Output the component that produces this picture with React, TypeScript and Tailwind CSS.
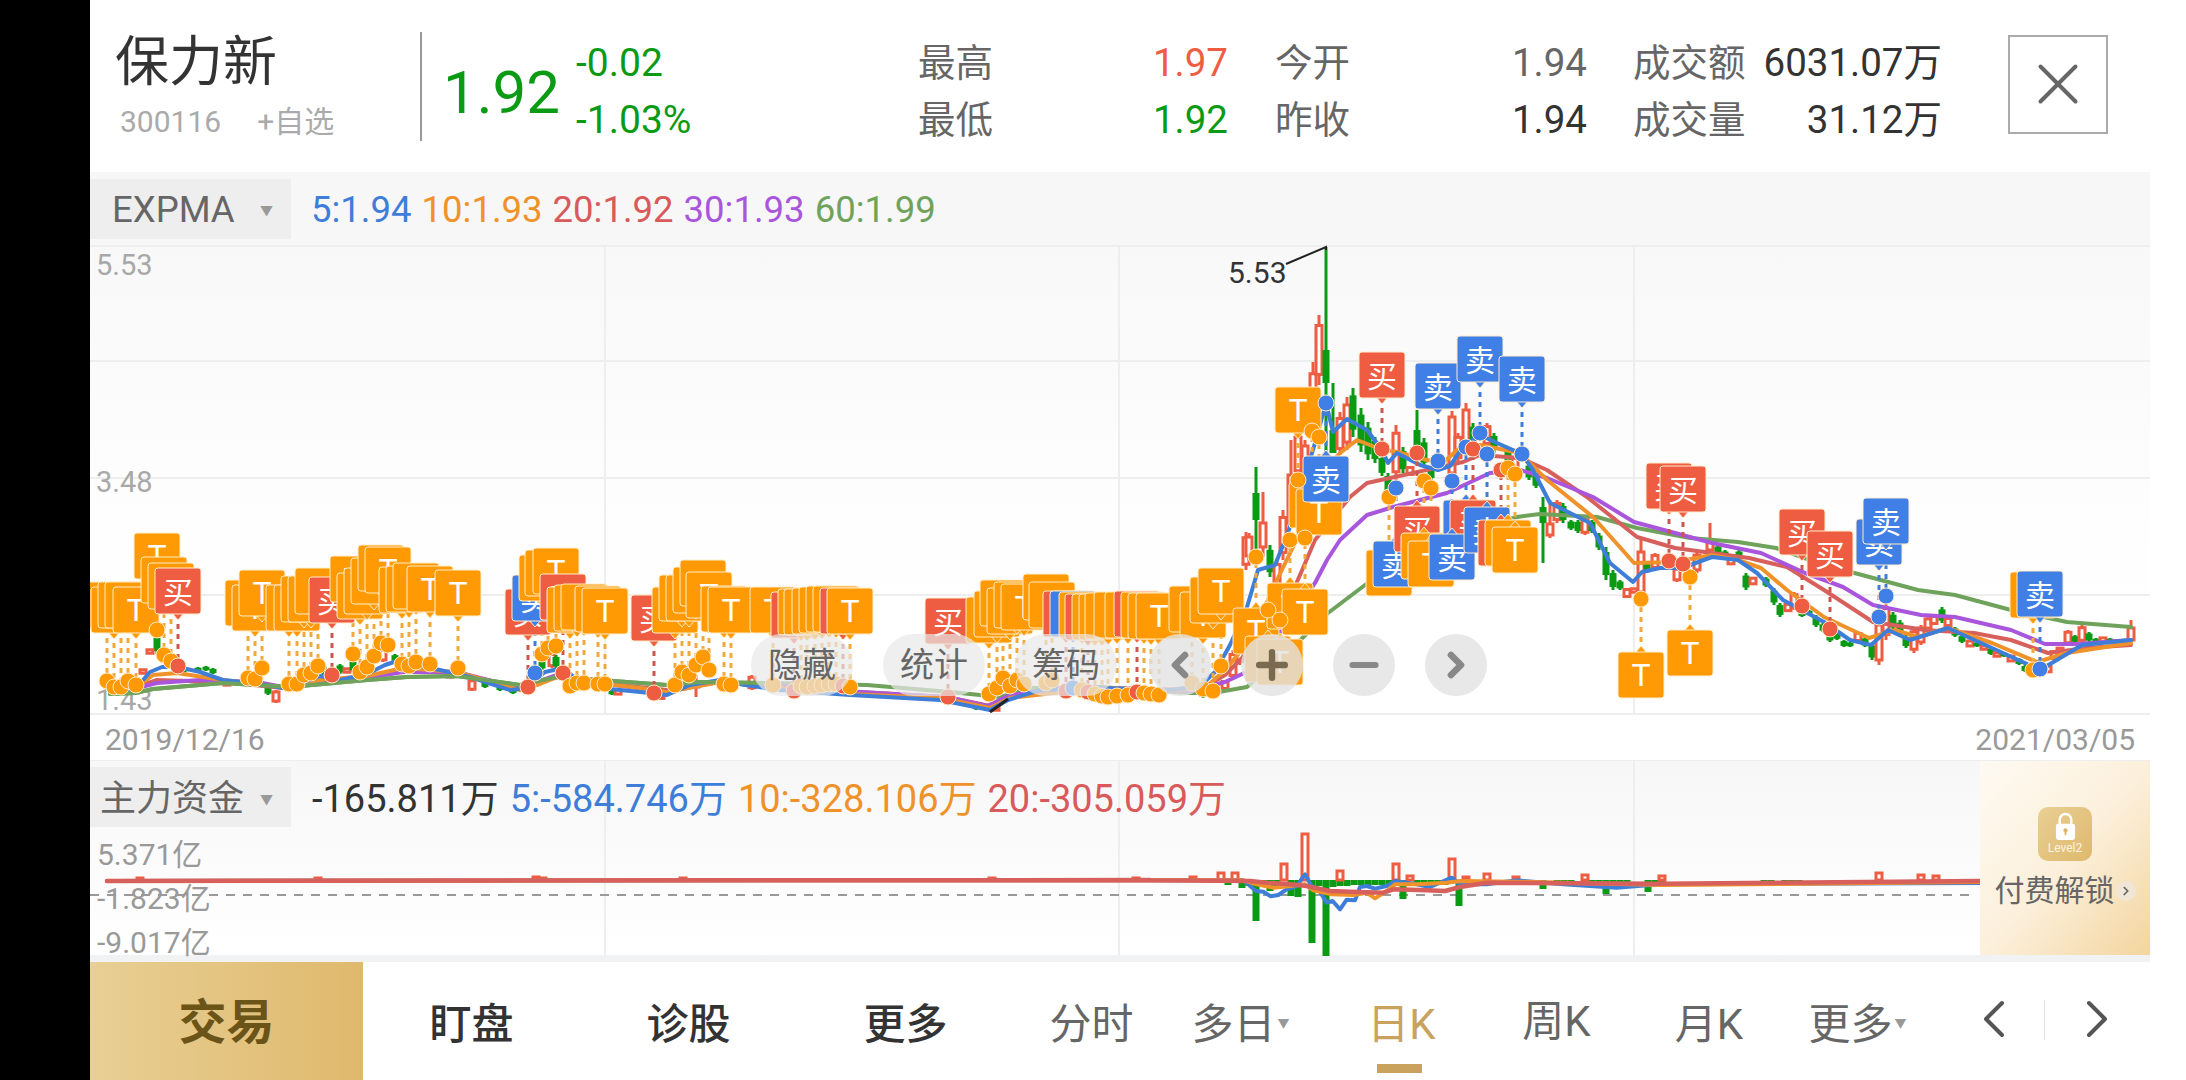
import { ChevronLeft, ChevronRight, Minus, Plus, X } from 'lucide-react';

type Kind = 'T' | '买' | '卖';
type Pt = [number, number];
// x, top of the box, dot y, points down or not
type Mark = [Kind, number, number, number, boolean?];
// x, wick top, wick bottom, red or green, optional body top and bottom
type Candle = [number, number, number, 'r' | 'g', number?, number?];

const RED = '#ee5c42';
const GREEN = '#0a9a14';
const BLUE = '#3f7fe6';
const ORANGE = '#ff9a05';

const markColor: Record<Kind, string> = { T: ORANGE, 买: RED, 卖: BLUE };
const lineColor: Record<Kind, string> = { T: '#efa93c', 买: '#c9574c', 卖: '#3f7ed8' };

const marks: Mark[] = [
  ['T', 107, 582, 681], ['T', 114, 587, 687], ['T', 121, 582, 687], ['T', 128, 582, 681], ['T', 136, 587, 685],
  ['T', 157, 533, 630], ['T', 164, 557, 655], ['T', 171, 563, 661], ['买', 178, 568, 666],
  ['T', 248, 580, 678], ['T', 255, 585, 679], ['T', 262, 570, 668],
  ['T', 289, 585, 684], ['T', 297, 585, 684], ['T', 304, 576, 675], ['T', 311, 576, 673], ['T', 318, 568, 666],
  ['买', 332, 577, 675],
  ['T', 353, 556, 654], ['T', 360, 573, 672], ['T', 367, 568, 667], ['T', 374, 558, 656], ['T', 381, 545, 643], ['T', 388, 547, 645],
  ['T', 402, 567, 664], ['T', 409, 566, 666], ['T', 416, 563, 662], ['T', 430, 566, 664], ['T', 458, 570, 668],
  ['买', 528, 589, 687], ['卖', 535, 575, 673], ['T', 542, 555, 654], ['T', 548, 550, 648], ['T', 556, 548, 646],
  ['买', 563, 574, 673], ['T', 570, 587, 686], ['T', 577, 585, 683], ['T', 584, 584, 683], ['T', 598, 586, 684],
  ['T', 605, 588, 684], ['买', 654, 595, 693],
  ['T', 675, 587, 685], ['T', 682, 575, 672], ['T', 689, 575, 675], ['T', 696, 567, 665], ['T', 703, 560, 657], ['T', 709, 572, 670],
  ['T', 724, 586, 684], ['T', 731, 587, 685], ['T', 773, 587, 685],
  ['买', 794, 592, 691], ['T', 801, 589, 686], ['T', 807, 589, 687], ['T', 815, 588, 686], ['T', 822, 587, 685],
  ['T', 829, 586, 684], ['T', 836, 586, 684], ['买', 843, 588, 686], ['T', 850, 588, 687],
  ['买', 948, 598, 697],
  ['T', 989, 597, 694], ['T', 997, 591, 688], ['T', 1003, 580, 678], ['T', 1010, 588, 686], ['T', 1017, 582, 680], ['T', 1024, 584, 684],
  ['T', 1046, 574, 683], ['T', 1052, 582, 680], ['买', 1066, 591, 691], ['卖', 1073, 591, 688],
  ['T', 1082, 592, 690], ['买', 1088, 594, 692], ['T', 1095, 594, 694], ['T', 1102, 594, 696], ['T', 1108, 593, 697],
  ['T', 1117, 592, 696], ['T', 1128, 592, 695], ['买', 1137, 591, 692], ['T', 1144, 592, 693], ['T', 1151, 593, 694], ['T', 1159, 593, 695],
  ['T', 1192, 586, 683], ['T', 1203, 592, 689], ['T', 1213, 577, 691], ['T', 1221, 568, 666],
  ['T', 1256, 608, 557, true], ['T', 1268, 636, 610, true], ['T', 1280, 639, 620, true], ['T', 1290, 583, 540, true], ['T', 1305, 589, 538, true],
  ['T', 1298, 387, 480], ['T', 1312, 482, 431, true], ['T', 1319, 489, 437, true], ['卖', 1326, 456, 403, true],
  ['买', 1382, 352, 449], ['卖', 1438, 363, 461], ['卖', 1480, 336, 433], ['卖', 1522, 356, 454],
  ['T', 1389, 550, 497, true], ['卖', 1396, 541, 488, true], ['买', 1417, 506, 453, true], ['T', 1424, 533, 481, true], ['T', 1431, 541, 488, true],
  ['卖', 1466, 500, 447, true], ['买', 1473, 500, 449, true], ['卖', 1452, 534, 481, true], ['卖', 1487, 507, 454, true],
  ['买', 1501, 520, 470, true], ['T', 1508, 520, 468, true], ['T', 1515, 527, 474, true],
  ['T', 1641, 652, 599, true], ['T', 1690, 630, 577, true],
  ['买', 1669, 463, 561], ['买', 1683, 466, 564], ['买', 1802, 509, 606], ['买', 1830, 531, 629],
  ['卖', 1879, 519, 617], ['卖', 1886, 498, 596], ['T', 2033, 572, 670], ['卖', 2040, 571, 669],
];

const candles: Candle[] = [
  [157, 635, 654, 'g'], [150, 649, 654, 'r'], [143, 669, 674, 'r'], [185, 667, 672, 'g'], [198, 667, 672, 'g'], [206, 666, 671, 'g'], [213, 668, 674, 'g'],
  [227, 680, 686, 'r'], [268, 686, 695, 'g'], [276, 690, 703, 'r'], [323, 665, 675, 'g'], [340, 664, 674, 'g'], [347, 668, 673, 'r'], [353, 660, 672, 'g'],
  [383, 648, 662, 'r'], [395, 654, 662, 'g'], [450, 672, 678, 'r'], [472, 679, 691, 'r'], [485, 681, 688, 'g'], [500, 685, 691, 'g'], [513, 688, 694, 'g'],
  [542, 660, 670, 'g'], [552, 652, 668, 'r'], [556, 655, 668, 'g'], [612, 690, 695, 'g'], [618, 689, 695, 'r'], [661, 695, 699, 'r'], [696, 675, 697, 'r', 683, 687],
  [705, 665, 674, 'g'], [752, 675, 690, 'r'], [976, 704, 710, 'g'], [996, 706, 711, 'r'],
  [1203, 690, 698, 'g'], [1225, 680, 690, 'r'], [1233, 650, 680, 'r'], [1240, 640, 665, 'r'],
  [1246, 532, 570, 'r'], [1249, 533, 560, 'r'], [1256, 467, 550, 'g', 493, 520], [1263, 492, 557, 'r', 523, 547], [1270, 545, 577, 'g'],
  [1277, 560, 590, 'r'], [1283, 510, 560, 'r'], [1291, 440, 523, 'r', 475, 523], [1298, 430, 478, 'r'], [1305, 440, 480, 'r'], [1313, 362, 440, 'r'],
  [1319, 315, 385, 'r'], [1326, 247, 455, 'g', 350, 383], [1333, 383, 453, 'g', 430, 453], [1340, 412, 455, 'r'], [1347, 397, 450, 'r'],
  [1353, 388, 437, 'g'], [1361, 408, 452, 'g'], [1368, 422, 460, 'g'], [1375, 437, 463, 'g'], [1382, 455, 476, 'g'], [1388, 473, 493, 'g'],
  [1396, 425, 480, 'r'], [1403, 447, 473, 'g'], [1410, 466, 476, 'r'], [1417, 410, 460, 'g', 430, 450], [1424, 438, 467, 'g'], [1431, 467, 480, 'g'],
  [1452, 411, 473, 'r', 417, 473], [1458, 433, 462, 'r'], [1466, 403, 450, 'r'], [1473, 423, 447, 'g'], [1487, 423, 447, 'r'], [1494, 433, 453, 'g'],
  [1508, 447, 463, 'g'], [1515, 456, 470, 'r'], [1529, 463, 480, 'g'], [1536, 473, 488, 'g'], [1543, 497, 563, 'g', 507, 523],
  [1550, 500, 538, 'r', 524, 535], [1557, 500, 523, 'r'], [1563, 503, 523, 'g'], [1571, 520, 530, 'g'], [1578, 520, 533, 'g'], [1585, 517, 535, 'r'],
  [1592, 520, 533, 'g'], [1599, 533, 550, 'g'], [1606, 547, 580, 'g'], [1613, 570, 590, 'g'], [1620, 580, 590, 'g'], [1627, 588, 598, 'r'],
  [1634, 588, 593, 'r'], [1641, 537, 593, 'r', 552, 592], [1647, 562, 573, 'g'], [1655, 553, 570, 'r'], [1677, 567, 582, 'r'], [1697, 552, 573, 'r'],
  [1710, 523, 547, 'r', 540, 550], [1718, 545, 555, 'g'], [1725, 550, 560, 'g'], [1731, 557, 565, 'r'], [1739, 550, 560, 'g'], [1746, 573, 590, 'g'],
  [1753, 577, 585, 'r'], [1766, 577, 587, 'g'], [1774, 588, 605, 'g'], [1780, 603, 617, 'g'], [1788, 603, 612, 'r'], [1794, 592, 610, 'r'],
  [1802, 610, 617, 'g'], [1809, 610, 615, 'g'], [1816, 615, 627, 'g'], [1823, 623, 632, 'g'], [1830, 632, 642, 'g'], [1837, 632, 640, 'g'],
  [1844, 640, 647, 'g'], [1850, 642, 647, 'g'], [1858, 632, 642, 'r'], [1865, 637, 647, 'g'], [1872, 643, 660, 'g'], [1879, 625, 665, 'r', 625, 660],
  [1886, 603, 640, 'r'], [1893, 612, 630, 'g'], [1900, 620, 637, 'g'], [1906, 635, 648, 'g'], [1914, 628, 653, 'r'], [1921, 625, 645, 'r'],
  [1928, 617, 630, 'r'], [1934, 615, 625, 'r'], [1942, 607, 623, 'g'], [1948, 617, 627, 'r'], [1955, 627, 637, 'g'], [1962, 635, 643, 'g'],
  [1970, 640, 647, 'r'], [1977, 642, 647, 'g'], [1984, 645, 650, 'r'], [1991, 648, 655, 'g'], [1997, 652, 657, 'r'], [2004, 652, 657, 'g'],
  [2011, 655, 662, 'r'], [2019, 658, 665, 'g'], [2025, 665, 672, 'g'], [2048, 665, 673, 'r'], [2054, 650, 660, 'r'], [2060, 647, 655, 'r'],
  [2068, 630, 645, 'r'], [2075, 635, 643, 'g'], [2082, 625, 643, 'r'], [2089, 632, 642, 'g'], [2096, 638, 643, 'g'], [2103, 637, 643, 'r'],
  [2110, 638, 643, 'g'], [2117, 640, 645, 'r'], [2123, 640, 643, 'r'], [2131, 620, 642, 'r', 628, 640],
];

const blue: Pt[] = [[110, 693], [137, 687], [150, 672], [162, 667], [178, 667], [200, 672], [223, 680], [260, 684], [283, 688], [300, 684], [320, 676], [340, 680], [367, 674], [385, 665], [400, 660], [412, 664], [440, 670], [470, 677], [510, 690], [528, 688], [535, 680], [545, 672], [563, 668], [580, 682], [600, 688], [640, 692], [667, 695], [690, 685], [720, 680], [745, 685], [780, 690], [850, 695], [940, 700], [990, 710], [1008, 700], [1040, 690], [1100, 688], [1170, 690], [1200, 686], [1215, 672], [1230, 645], [1247, 607], [1258, 570], [1275, 565], [1288, 533], [1315, 443], [1326, 403], [1333, 432], [1347, 419], [1367, 430], [1382, 450], [1388, 463], [1397, 453], [1420, 465], [1438, 470], [1450, 466], [1463, 447], [1480, 435], [1497, 443], [1522, 454], [1533, 470], [1550, 503], [1590, 523], [1610, 563], [1633, 582], [1642, 572], [1660, 568], [1682, 568], [1712, 557], [1738, 560], [1757, 573], [1783, 600], [1824, 622], [1850, 640], [1871, 645], [1888, 630], [1910, 640], [1948, 628], [1992, 648], [2040, 670], [2082, 645], [2131, 640]];
const orange: Pt[] = [[110, 693], [137, 687], [153, 675], [177, 673], [223, 680], [260, 684], [283, 688], [320, 680], [367, 676], [403, 668], [457, 672], [520, 690], [540, 684], [565, 674], [590, 682], [640, 688], [667, 692], [720, 682], [780, 688], [850, 694], [940, 698], [990, 708], [1010, 698], [1100, 688], [1170, 690], [1205, 688], [1225, 670], [1250, 640], [1277, 580], [1293, 547], [1310, 510], [1325, 470], [1340, 453], [1357, 440], [1380, 449], [1397, 452], [1427, 460], [1443, 463], [1457, 450], [1480, 445], [1520, 453], [1547, 480], [1593, 517], [1634, 563], [1675, 562], [1712, 555], [1738, 560], [1761, 568], [1787, 590], [1824, 617], [1869, 638], [1895, 630], [1918, 637], [1948, 628], [1992, 643], [2037, 662], [2067, 653], [2131, 643]];
const red: Pt[] = [[110, 693], [137, 687], [157, 680], [223, 682], [283, 688], [320, 682], [367, 677], [403, 670], [457, 673], [520, 688], [557, 677], [590, 682], [667, 690], [720, 682], [780, 686], [860, 692], [947, 697], [990, 706], [1015, 695], [1100, 688], [1200, 690], [1225, 675], [1250, 650], [1280, 620], [1300, 575], [1315, 540], [1350, 497], [1367, 483], [1413, 473], [1463, 462], [1480, 455], [1520, 458], [1547, 470], [1587, 497], [1637, 537], [1675, 548], [1749, 558], [1787, 567], [1824, 590], [1873, 622], [1925, 630], [1974, 633], [2011, 640], [2048, 653], [2086, 648], [2131, 645]];
const purple: Pt[] = [[110, 693], [137, 688], [157, 683], [200, 680], [257, 682], [283, 687], [303, 683], [367, 678], [403, 672], [457, 672], [520, 688], [557, 675], [590, 680], [600, 683], [667, 692], [717, 682], [780, 686], [860, 692], [947, 697], [987, 706], [1010, 695], [1067, 687], [1100, 688], [1190, 691], [1225, 682], [1255, 668], [1285, 625], [1315, 583], [1327, 560], [1340, 540], [1367, 515], [1393, 507], [1447, 493], [1490, 473], [1520, 470], [1547, 478], [1593, 497], [1634, 522], [1675, 533], [1712, 543], [1761, 553], [1805, 573], [1843, 587], [1873, 605], [1921, 615], [1955, 617], [2011, 630], [2045, 644], [2078, 644], [2131, 640]];
const olive: Pt[] = [[110, 694], [135, 693], [153, 689], [223, 683], [290, 687], [367, 680], [407, 677], [457, 676], [520, 685], [557, 677], [600, 680], [667, 685], [700, 682], [767, 683], [867, 685], [950, 692], [1000, 697], [1033, 688], [1100, 687], [1190, 693], [1213, 693], [1247, 687], [1290, 650], [1328, 613], [1365, 585], [1420, 545], [1517, 517], [1540, 514], [1597, 517], [1637, 528], [1690, 538], [1738, 542], [1776, 548], [1824, 565], [1862, 575], [1918, 590], [1955, 595], [2011, 610], [2067, 622], [2131, 627]];

const subRed: Pt[] = [[1221, 872], [1235, 872], [1284, 863], [1305, 833], [1340, 870], [1396, 863], [1410, 875], [1452, 858], [1466, 876], [1487, 873], [1516, 876], [1585, 874], [1193, 876], [1662, 875], [1879, 872], [1921, 874], [1936, 875], [140, 877], [318, 877], [536, 876], [543, 877], [683, 877], [992, 877], [1136, 877]];
const subGreen: Pt[] = [[1256, 920], [1312, 942], [1326, 955], [1459, 905], [1403, 898], [1606, 893], [1543, 888], [1648, 891], [1242, 887], [1228, 884], [1291, 895], [1298, 896], [1270, 890], [1249, 885], [1263, 885], [1277, 885], [1319, 885], [1333, 886], [1340, 885], [1347, 885], [1354, 884], [1361, 884], [1368, 884], [1375, 884], [1382, 884], [1389, 884], [1396, 884], [1417, 884], [1424, 884], [1431, 884], [1438, 884], [1445, 884], [1473, 884], [1480, 884], [1494, 884], [1501, 883], [1508, 883], [1523, 883], [1530, 883], [1557, 883], [1564, 883], [1571, 883], [1592, 883], [1599, 883], [1613, 883], [1620, 883], [1627, 883], [1655, 883], [1662, 883], [1764, 883], [1771, 883], [1785, 883], [1792, 883], [1799, 883]];

const toSub = (a: Pt[]): Pt[] => a.map(([x, y]) => [1150 + x / 3, 820 + y / 3]);
const subBlue = toSub([[0, 178], [280, 178], [318, 210], [340, 212], [362, 226], [385, 222], [410, 205], [440, 195], [465, 160], [490, 205], [510, 212], [530, 245], [548, 240], [570, 265], [590, 236], [615, 238], [630, 198], [650, 195], [675, 203], [710, 195], [735, 180], [800, 190], [840, 198], [905, 170], [930, 190], [1010, 190], [1100, 178], [1240, 190], [1400, 200], [1530, 190]]);
const subOrange = toSub([[0, 178], [280, 178], [320, 190], [370, 200], [420, 195], [465, 190], [490, 208], [545, 220], [610, 222], [650, 215], [675, 232], [710, 210], [735, 190], [800, 190], [890, 185], [930, 180], [1100, 182], [1530, 192]]);
const subLine = toSub([[0, 178], [300, 180], [350, 185], [420, 190], [470, 195], [540, 210], [600, 212], [700, 215], [730, 205], [830, 208], [885, 210], [930, 198], [1010, 185], [1530, 188]]);

const pts = (a: Pt[]) => a.map((p) => p.join(',')).join(' ');

const MaLine = ({ data, color, width = 4 }: { data: Pt[]; color: string; width?: number }) => (
  <polyline points={pts(data)} fill="none" stroke={color} strokeWidth={width} strokeLinejoin="round" strokeLinecap="round" />
);

const CandleBar = ({ c }: { c: Candle }) => {
  const [x, hi, lo, kind, bodyTop, bodyBot] = c;
  const top = bodyTop ?? hi + (lo - hi) * 0.15;
  const bot = bodyBot ?? hi + (lo - hi) * 0.85;
  const color = kind === 'r' ? RED : GREEN;
  return (
    <g>
      <line x1={x} x2={x} y1={hi} y2={lo} stroke={color} strokeWidth={3} />
      {kind === 'r' ? (
        <rect x={x - 3} y={top} width={6} height={bot - top} fill="#fff" stroke={color} strokeWidth={3} />
      ) : (
        <rect x={x - 3.5} y={top} width={7} height={bot - top} fill={color} />
      )}
    </g>
  );
};

const MarkStem = ({ m }: { m: Mark }) => {
  const [kind, x, top, dot, up] = m;
  return (
    <line x1={x} x2={x} y1={up ? top : top + 46} y2={dot} stroke={lineColor[kind]} strokeWidth={3} strokeDasharray="5 5" />
  );
};

const MarkBox = ({ m }: { m: Mark }) => {
  const [kind, x, top, , up] = m;
  const tip = up
    ? `${x - 6},${top + 1} ${x},${top - 6} ${x + 6},${top + 1}`
    : `${x - 6},${top + 45} ${x},${top + 52} ${x + 6},${top + 45}`;
  return (
    <g>
      <polygon points={tip} fill={markColor[kind]} stroke="#ffeccb" strokeWidth={1} />
      <rect x={x - 23} y={top} width={46} height={46} rx={3} fill={markColor[kind]} stroke="#ffeccb" strokeWidth={1} />
      <text x={x} y={top + (kind === 'T' ? 34 : 35)} textAnchor="middle" fill="#fff" fontSize={kind === 'T' ? 32 : 30}>
        {kind}
      </text>
    </g>
  );
};

const MainChart = () => (
  <svg viewBox="90 245 2060 470" className="h-[470px] w-[2060px]">
    <defs>
      <linearGradient id="chartBg" x1="0" y1="0" x2="0" y2="1">
        <stop offset="0" stopColor="#f8f8f8" />
        <stop offset="0.6" stopColor="#fefefe" />
        <stop offset="1" stopColor="#ffffff" />
      </linearGradient>
    </defs>
    <rect x="90" y="245" width="2060" height="470" fill="url(#chartBg)" />
    {[246, 361, 478, 595, 714].map((y) => (
      <line key={y} x1="90" x2="2150" y1={y} y2={y} stroke="#eeeeee" strokeWidth="2" />
    ))}
    {[605, 1119, 1634].map((x) => (
      <line key={x} x1={x} x2={x} y1="245" y2="715" stroke="#eeeeee" strokeWidth="2" />
    ))}
    <text x="96" y="275" fontSize="29" fill="#a8a8a8">5.53</text>
    <text x="96" y="492" fontSize="29" fill="#a8a8a8">3.48</text>
    <text x="96" y="710" fontSize="29" fill="#a8a8a8">1.43</text>
    {candles.map((c, i) => (
      <CandleBar key={i} c={c} />
    ))}
    <MaLine data={olive} color="#6fa35c" />
    <MaLine data={red} color="#d8605c" />
    <MaLine data={purple} color="#a955dc" />
    <MaLine data={orange} color="#f0922a" />
    <MaLine data={blue} color="#3f7ed8" />
    <MaLine data={olive.slice(0, 14)} color="#6fa35c" />
    <polyline points="1286,264 1326,247 1326,250" fill="none" stroke="#222" strokeWidth="2" />
    <text x="1228" y="283" fontSize="30" fill="#333">5.53</text>
    <line x1="990" y1="712" x2="1008" y2="699" stroke="#222" strokeWidth="3" />
    {marks.map((m, i) => (
      <MarkStem key={i} m={m} />
    ))}
    {marks.map((m, i) => (
      <MarkBox key={i} m={m} />
    ))}
    {marks.map((m, i) => (
      <circle key={i} cx={m[1]} cy={m[3]} r={8} fill={markColor[m[0]]} stroke="#ffe9c8" strokeWidth={1} />
    ))}
  </svg>
);

const SubChart = () => (
  <svg viewBox="90 760 1890 195" className="absolute inset-0 h-[195px] w-[1890px]">
    {[605, 1119, 1634].map((x) => (
      <line key={x} x1={x} x2={x} y1="760" y2="955" stroke="#eeeeee" strokeWidth="2" />
    ))}
    <line x1="90" x2="1975" y1="894" y2="894" stroke="#999" strokeWidth="2" strokeDasharray="9 8" />
    {subGreen.map(([x, y], i) => (
      <rect key={i} x={x - 3.5} y={879} width={7} height={y - 879} fill={GREEN} />
    ))}
    {subRed.map(([x, y], i) => (
      <rect key={i} x={x - 3} y={y} width={6} height={879 - y} fill="#fff" stroke={RED} strokeWidth={3} />
    ))}
    <MaLine data={[[107, 880], [1150, 879], ...subBlue, [1980, 882]]} color="#3f7ed8" />
    <MaLine data={[[107, 880], [1150, 879], ...subOrange, [1980, 881]]} color="#f0922a" />
    <MaLine data={[[107, 880], [1150, 879], ...subLine, [1980, 880]]} color="#d8605c" width={4.5} />
  </svg>
);

const OverlayPill = ({ children }: { children: string }) => (
  <div className="flex h-[62px] w-[102px] items-center justify-center rounded-full bg-[#e8e8e8]/70 text-[34px] text-[#666]">{children}</div>
);

const OverlayRound = ({ children }: { children: React.ReactNode }) => (
  <div className="flex size-[62px] items-center justify-center rounded-full bg-[#e2e2e2]/80 text-[#888]">{children}</div>
);

const Stat = ({ label, value, tone }: { label: string; value: string; tone: string }) => (
  <div className="flex h-[57px] items-center justify-between">
    <span className="text-[37.5px] text-[#666]">{label}</span>
    <span className={`text-[38.5px] ${tone}`}>{value}</span>
  </div>
);

const Arrow = () => <span className="text-[13px] leading-none text-[#999]">▼</span>;

const Tab = ({ children, className = '' }: { children: React.ReactNode; className?: string }) => (
  <div className={`flex w-[155px] items-center justify-center pt-[6px] text-[42px] text-[#666] ${className}`}>{children}</div>
);

export default function App() {
  return (
    <div className="flex h-[1080px] w-[2186px] overflow-hidden bg-white font-['Roboto','Noto_Sans_CJK_SC',sans-serif]">
      <div className="w-[90px] bg-black" />
      <div className="flex w-[2060px] flex-col">
        {/* Quote header */}
        <div className="flex h-[172px] items-center">
          <div className="w-[330px] pl-[25px]">
            <div className="text-[54px] leading-[64px] text-[#333]">保力新</div>
            <div className="mt-[8px] flex text-[30px] leading-[38px] text-[#aaa]">
              <span className="ml-[5px]">300116</span>
              <span className="ml-[36px]">+自选</span>
            </div>
          </div>
          <div className="h-[109px] w-[2px] bg-[#999]" />
          <div className="ml-[21px] w-[113px] pt-[14px] text-[60px] text-[#0a9a14]">1.92</div>
          <div className="ml-[20px] flex w-[342px] flex-col pt-[11px] text-[39px] leading-[57px] text-[#0a9a14]">
            <span>-0.02</span>
            <span>-1.03%</span>
          </div>
          <div className="w-[310px] pt-[11px]">
            <Stat label="最高" value="1.97" tone="text-[#ee5c42]" />
            <Stat label="最低" value="1.92" tone="text-[#0a9a14]" />
          </div>
          <div className="ml-[47px] w-[312px] pt-[11px]">
            <Stat label="今开" value="1.94" tone="text-[#666]" />
            <Stat label="昨收" value="1.94" tone="text-[#333]" />
          </div>
          <div className="ml-[46px] w-[309px] pt-[11px]">
            <Stat label="成交额" value="6031.07万" tone="text-[#333]" />
            <Stat label="成交量" value="31.12万" tone="text-[#333]" />
          </div>
          <div className="ml-[66px] -mt-[4px] flex h-[99px] w-[100px] items-center justify-center border-2 border-[#aaa]">
            <X size={70} strokeWidth={4} absoluteStrokeWidth className="text-[#666]" />
          </div>
        </div>

        {/* Indicator legend */}
        <div className="flex h-[73px] items-center bg-[#f7f7f7] text-[36.5px]">
          <div className="flex h-[60px] w-[201px] items-center justify-between bg-[#eeeeee] pl-[22px] pr-[18px] pt-[4px] text-[#666]">
            <span>EXPMA</span>
            <Arrow />
          </div>
          <div className="ml-[20px] flex gap-[10px] pt-[4px]">
            <span className="text-[#3f7ed8]">5:1.94</span>
            <span className="text-[#f0922a]">10:1.93</span>
            <span className="text-[#d85a5a]">20:1.92</span>
            <span className="text-[#a955dc]">30:1.93</span>
            <span className="text-[#6fa35c]">60:1.99</span>
          </div>
        </div>

        {/* Candle chart */}
        <div className="relative h-[470px]">
          <MainChart />
          <div className="absolute left-[661px] top-[389px] flex gap-[30px]">
            <OverlayPill>隐藏</OverlayPill>
            <OverlayPill>统计</OverlayPill>
            <OverlayPill>筹码</OverlayPill>
          </div>
          <div className="absolute left-[1059px] top-[389px] flex gap-[30px]">
            <OverlayRound>
              <ChevronLeft size={40} strokeWidth={4} />
            </OverlayRound>
            <OverlayRound>
              <Plus size={44} strokeWidth={3.5} className="text-[#7a6a50]" />
            </OverlayRound>
            <OverlayRound>
              <Minus size={40} strokeWidth={3.5} />
            </OverlayRound>
            <OverlayRound>
              <ChevronRight size={40} strokeWidth={4} />
            </OverlayRound>
          </div>
        </div>

        {/* Date range */}
        <div className="flex h-[45px] items-center justify-between px-[15px] pt-[4px] text-[30px] text-[#999]">
          <span>2019/12/16</span>
          <span>2021/03/05</span>
        </div>

        {/* Capital flow panel */}
        <div className="flex h-[195px] border-t border-[#eee]">
          <div className="relative w-[1890px] bg-gradient-to-b from-[#f7f7f7] to-white">
            <SubChart />
            <div className="relative flex h-[72px] items-center text-[38px]">
              <div className="flex h-[60px] w-[201px] items-center justify-between bg-[#eeeeee] pl-[10px] pr-[18px] pt-[4px] text-[#666]">
                <span className="text-[36px]">主力资金</span>
                <Arrow />
              </div>
              <div className="ml-[21px] flex gap-[11px] pt-[4px]">
                <span className="text-[#333]">-165.811万</span>
                <span className="text-[#3f7ed8]">5:-584.746万</span>
                <span className="text-[#f0922a]">10:-328.106万</span>
                <span className="text-[#d85a5a]">20:-305.059万</span>
              </div>
            </div>
            <div className="relative ml-[7px] text-[30px] leading-[44px] text-[#999]">
              <div>5.371亿</div>
              <div>-1.823亿</div>
              <div>-9.017亿</div>
            </div>
          </div>
          <div className="flex w-[170px] flex-col items-center bg-gradient-to-br from-[#fefaf2] via-[#fcf0dc] to-[#f3d59e] pt-[46px]">
            <div className="flex size-[54px] flex-col items-center rounded-[10px] bg-gradient-to-br from-[#e8cf94] to-[#dfb96c] pt-[5px]">
              <svg viewBox="0 0 24 30" className="h-[29px] w-[23px]">
                <path d="M6 13V8a6 6 0 0 1 12 0v5" fill="none" stroke="#fff" strokeWidth="2.6" />
                <rect x="2" y="12" width="20" height="17" rx="2.5" fill="#fff" />
                <circle cx="12" cy="19" r="2.2" fill="#d9b56f" />
                <rect x="11" y="19" width="2" height="5" fill="#d9b56f" />
              </svg>
              <span className="text-[12px] leading-[14px] text-[#fdf4e0]">Level2</span>
            </div>
            <div className="mt-[7px] flex items-center text-[30px] text-[#666]">
              <span>付费解锁</span>
              <span className="ml-px flex size-[20px] items-center justify-center rounded-full bg-[#efe6d6]">
                <ChevronRight size={14} strokeWidth={3} />
              </span>
            </div>
          </div>
        </div>
        <div className="h-[7px] bg-[#f1f2f4]" />

        {/* Bottom tabs */}
        <div className="flex h-[118px]">
          <div className="flex w-[273px] items-center justify-center bg-gradient-to-r from-[#e8cf94] to-[#dfb96c] pt-[4px] text-[48px] font-bold text-[#6b5418]">交易</div>
          <div className="flex w-[217px] items-center justify-center pt-[6px] text-[42px] font-medium text-[#333]">盯盘</div>
          <div className="flex w-[217px] items-center justify-center pt-[6px] text-[42px] font-medium text-[#333]">诊股</div>
          <div className="flex w-[217px] items-center justify-center pt-[6px] text-[42px] font-medium text-[#333]">更多</div>
          <Tab>分时</Tab>
          <Tab className="pr-[12px]">
            多日
            <span className="ml-[2px] text-[12px] text-[#999]">▼</span>
          </Tab>
          <Tab className="relative text-[#c9a35e]">
            日K
            <span className="absolute bottom-[7px] left-[53px] h-[9px] w-[45px] bg-[#c9a35e]" />
          </Tab>
          <Tab className="pb-[6px]">周K</Tab>
          <Tab className="pr-[5px]">月K</Tab>
          <Tab className="pr-[18px]">
            更多
            <span className="ml-[2px] text-[12px] text-[#999]">▼</span>
          </Tab>
          <div className="flex w-[100px] items-center justify-center pb-[4px]">
            <ChevronLeft size={64} strokeWidth={4} absoluteStrokeWidth className="text-[#555]" />
          </div>
          <div className="mt-[38px] h-[40px] w-px bg-[#e5e5e5]" />
          <div className="flex w-[104px] items-center justify-center pb-[4px]">
            <ChevronRight size={64} strokeWidth={4} absoluteStrokeWidth className="text-[#555]" />
          </div>
        </div>
      </div>
      <div className="w-[36px] bg-white" />
    </div>
  );
}
